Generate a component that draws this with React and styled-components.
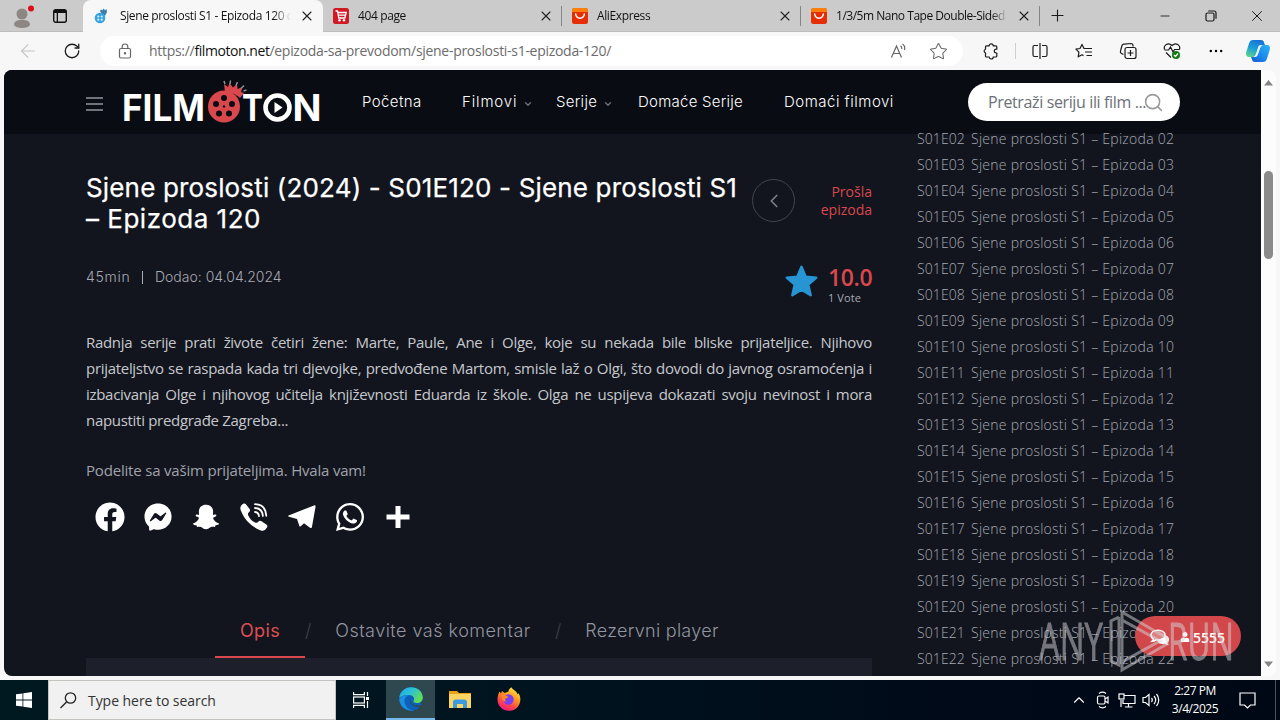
import styled, { createGlobalStyle } from "styled-components";
import {
  ArrowLeft,
  RotateCw,
  Star,
  X,
  Plus,
  Minus,
  Search,
  ChevronDown,
  ChevronLeft,
  ChevronUp,
} from "lucide-react";
import {
  FaFacebook,
  FaFacebookMessenger,
  FaSnapchatGhost,
  FaWhatsapp,
  FaUser,
} from "react-icons/fa";

const GlobalStyle = createGlobalStyle`
  * {
    box-sizing: border-box;
  }
  body {
    margin: 0;
    overflow: hidden;
    font-family: "Open Sans", "Noto Sans", sans-serif;
  }
  svg {
    display: block;
    flex: none;
    overflow: visible;
  }
`;

const Screen = styled.div`
  width: 1280px;
  height: 720px;
  display: flex;
  flex-direction: column;
  background: #f7f7f7;
`;

/* ---------- browser chrome ---------- */

const TabStrip = styled.div`
  height: 32px;
  display: flex;
  background: #cbcbcb;
  border-bottom: 1px solid #bdbdbd;
`;
const Slot = styled.div`
  width: ${({ $w }) => $w || 44}px;
  height: 100%;
  flex: none;
  display: flex;
  align-items: center;
  justify-content: center;
  color: ${({ $color }) => $color || "#1b1b1b"};
`;
const Tab = styled.div`
  width: ${({ $active }) => ($active ? 240 : 239)}px;
  height: 32px;
  display: flex;
  align-items: center;
  padding: 0 8px 0 ${({ $active }) => ($active ? 11 : 10)}px;
  gap: 8px;
  background: ${({ $active }) => ($active ? "#f7f7f7" : "transparent")};
  border-radius: 8px 8px 0 0;
`;
const TabTitle = styled.div`
  flex: 1;
  overflow: hidden;
  white-space: nowrap;
  color: #111;
  font-size: 12px;
  line-height: 18px;
  letter-spacing: ${({ $ls }) => $ls || -0.38}px;
  padding-left: ${({ $indent }) => $indent || 0}px;
  mask-image: linear-gradient(90deg, #000 90%, transparent);
`;
const TabDivider = styled.div`
  width: 1px;
  height: 20px;
  margin: 6px 0 0 -1px;
  background: #858585;
`;
const Spacer = styled.div`
  flex: 1;
`;

const Toolbar = styled.div`
  height: 38px;
  display: flex;
  align-items: center;
  padding-left: 6px;
  background: #f7f7f7;
`;
const AddressBar = styled.div`
  width: 863px;
  height: 30px;
  margin: 0 6px;
  display: flex;
  align-items: center;
  border-radius: 15px;
  background: #fff;
  color: #6b6b6b;
`;
const Url = styled.div`
  flex: 1;
  white-space: nowrap;
  font-size: 14px;
  line-height: 20px;
  letter-spacing: -0.29px;
`;
const Host = styled.span`
  color: #111;
  letter-spacing: -0.44px;
`;
const ToolDivider = styled.div`
  width: 1px;
  height: 16px;
  margin: 0 2px;
  background: #cfcfcf;
`;

const Viewport = styled.div`
  height: 606px;
  margin: 0 4px;
  display: flex;
  overflow: hidden;
  border-radius: 8px;
  position: relative;
`;
const ScrollTrack = styled.div`
  width: 15px;
  display: flex;
  flex-direction: column;
  align-items: center;
  padding: 10px 0 9px;
  background: #fcfcfc;
`;
const ScrollThumb = styled.div`
  width: 9px;
  height: 88px;
  margin-top: 85px;
  border-radius: 5px;
  background: #8b8b8b;
`;

/* ---------- site ---------- */

const Site = styled.div`
  width: 1257px;
  height: 606px;
  display: flex;
  flex-direction: column;
  overflow: hidden;
  background: #12151e;
`;
const SiteHeader = styled.header`
  height: 64px;
  flex: none;
  display: flex;
  align-items: center;
  padding: 0 81px 0 82px;
  background: #0a0c14;
`;
const Burger = styled.div`
  width: 17px;
  height: 14px;
  margin: 3px 21px 0 0;
  display: flex;
  flex-direction: column;
  justify-content: space-between;
`;
const BurgerLine = styled.div`
  height: 2px;
  background: #71737a;
`;
const Nav = styled.nav`
  flex: 1;
  height: 26px;
  display: flex;
  padding-left: 42px;
`;
const NavItem = styled.a`
  width: ${({ $w }) => $w}px;
  display: flex;
  align-items: center;
  gap: 6px;
  white-space: nowrap;
  color: #fff;
  font: 300 15px/24px Inter, sans-serif;
  letter-spacing: ${({ $ls }) => $ls}px;

  svg {
    color: #6f727a;
    margin-top: 4px;
  }
`;
const SearchBox = styled.div`
  width: 212px;
  height: 38px;
  display: flex;
  align-items: center;
  padding: 0 16px 0 20px;
  border-radius: 19px;
  background: #fff;
  color: #9b9b9b;
`;
const SearchText = styled.div`
  width: 155px;
  white-space: nowrap;
  color: #6c7077;
  font-size: 16px;
  line-height: 24px;
  letter-spacing: -0.37px;
`;

const Columns = styled.div`
  flex: 1;
  display: flex;
  gap: 45px;
  padding-left: 82px;
  min-height: 0;
`;
const Main = styled.main`
  width: 786px;
  display: flex;
  flex-direction: column;
`;
const TitleRow = styled.div`
  height: 130px;
  display: flex;
  padding-top: 38px;
`;
const Title = styled.h1`
  width: 666px;
  margin: 0;
  white-space: nowrap;
  color: #fff;
  font: 400 26px/31px Inter, sans-serif;
  letter-spacing: 0.16px;
  -webkit-text-stroke: 0.25px #fff;
`;
const TitleTail = styled.div`
  letter-spacing: 0.5px;
`;
const PrevButton = styled.div`
  width: 43px;
  height: 43px;
  margin-top: 7px;
  display: flex;
  align-items: center;
  justify-content: center;
  border: 1px solid #434650;
  border-radius: 50%;
  color: #7c7f88;
`;
const PrevLabel = styled.div`
  flex: 1;
  margin-top: 11px;
  text-align: right;
  color: #d9484c;
  font-size: 14px;
  line-height: 18px;
`;
const MetaRow = styled.div`
  height: 65px;
  display: flex;
  color: #a9abb3;
`;
const Meta = styled.div`
  flex: 1;
  display: flex;
  padding-top: 3px;
  font: 300 14px/20px Inter, sans-serif;
`;
const Duration = styled.span`
  width: 56px;
  letter-spacing: 0.7px;
`;
const Divider = styled.div`
  width: 1px;
  height: 13px;
  margin: 4px 12px 0 0;
  background: #a9abb3;
`;
const StarWrap = styled.div`
  padding-top: 1px;
`;
const Score = styled.div`
  width: 44px;
  margin-left: 10px;
`;
const ScoreValue = styled.div`
  color: #d9484c;
  font-size: 23px;
  font-weight: 600;
  line-height: 27px;
  letter-spacing: -0.4px;
`;
const Votes = styled.div`
  font-size: 11px;
  line-height: 14px;
  letter-spacing: 0.1px;
`;
const Summary = styled.div`
  height: 104px;
  color: #c6c8cd;
  font-size: 15px;
  line-height: 26px;
  letter-spacing: -0.3px;
`;
const SummaryLine = styled.div`
  white-space: nowrap;
  text-align: justify;
  text-align-last: ${({ $last }) => ($last ? "left" : "justify")};
`;
const ShareText = styled.div`
  margin-top: 24px;
  color: #a0a3ab;
  font-size: 15px;
  line-height: 26px;
  letter-spacing: -0.19px;
`;
const ShareRow = styled.div`
  display: flex;
  height: 48px;
  margin-top: 10px;
`;
const PageTabs = styled.div`
  height: 54px;
  margin-top: 63px;
  padding-left: 129px;
  display: flex;
  color: #9396a0;
  font: 300 18px/54px Inter, sans-serif;
`;
const PageTab = styled.div`
  width: ${({ $w }) => $w}px;
  flex: none;
  white-space: nowrap;
  text-align: center;
  letter-spacing: ${({ $ls }) => $ls}px;
  color: ${({ $active }) => ($active ? "#dd4f53" : "inherit")};
  font-weight: ${({ $active }) => ($active ? 400 : 300)};
  border-bottom: 2px solid ${({ $active }) => ($active ? "#d9484c" : "transparent")};
`;
const Slash = styled.div`
  width: 6px;
  text-align: center;
  color: #3d4049;
`;
const Panel = styled.div`
  height: 18px;
  background: #1d1f2b;
`;

const EpisodeList = styled.div`
  margin-top: -8px;
  color: #a6a9b1;
  font-size: 14px;
  font-weight: 300;
  line-height: 26px;
`;
const Episode = styled.div`
  height: 26px;
  display: flex;
  white-space: nowrap;
  letter-spacing: 0.26px;
`;
const Code = styled.span`
  width: 54px;
  letter-spacing: 0.1px;
`;

const ChatPill = styled.div`
  position: absolute;
  right: 35px;
  bottom: 20px;
  width: 106px;
  height: 40px;
  display: flex;
  align-items: center;
  gap: 3px;
  padding: 2px 0 0 15px;
  border-radius: 20px;
  background: #d1474a;
  color: #fff;
  font-size: 14px;
  font-weight: 600;

  svg + svg {
    margin-left: 7px;
  }
`;
const Watermark = styled.svg`
  position: absolute;
  left: 1034px;
  top: 538px;
  opacity: 0.5;
`;

/* ---------- taskbar ---------- */

const Taskbar = styled.div`
  height: 40px;
  margin-top: 4px;
  display: flex;
  background: linear-gradient(90deg, #001820 0%, #001420 40%, #000a18 75%, #000815 100%);
`;
const TaskSearch = styled.div`
  width: 288px;
  height: 40px;
  display: flex;
  align-items: center;
  gap: 11px;
  padding-left: 11px;
  border: 1px solid #c4c4c0;
  background: #f1f1f1;
  color: #333;
  font-size: 14px;
  letter-spacing: -0.05px;
`;
const TaskApp = styled.div`
  width: 49px;
  display: flex;
  align-items: center;
  justify-content: center;
  background: ${({ $active }) => ($active ? "#2f474f" : "transparent")};
  border-bottom: 2px solid ${({ $active }) => ($active ? "#76b9ed" : "transparent")};
`;
const Clock = styled.div`
  width: 64px;
  padding-top: 2px;
  text-align: center;
  color: #fff;
  font-size: 12px;
  line-height: 18px;
  letter-spacing: -0.45px;
`;
const ShowDesktop = styled.div`
  width: 5px;
  border-left: 1px solid #4a525c;
`;

/* ---------- drawings ---------- */

const Close = () => <X size={16} strokeWidth={1.6} color="#222" />;

const line = { fill: "none", stroke: "currentColor", strokeWidth: 1.2 };

const Avatar = () => (
  <svg width="24" height="26" viewBox="0 0 24 26">
    <circle cx="12" cy="11" r="5.5" fill="#8c8782" />
    <path d="M4 22c0-4 3-5 8-5s8 1 8 5c-1 2-4 3-8 3s-7-1-8-3z" fill="#8c8782" />
    <circle cx="21" cy="5.5" r="3" fill="#e00b1c" />
  </svg>
);
const Workspaces = () => (
  <svg width="16" height="16" viewBox="0 0 16 16">
    <rect x="1.7" y="1.7" width="12.6" height="12.6" rx="2" fill="none" stroke="#111" strokeWidth="1.4" />
    <path d="M2 2h12v3H6v9H4.700V5H2z" fill="#111" />
  </svg>
);
const FilmFavicon = () => (
  <svg width="14" height="16" viewBox="0 0 14 16">
    <path d="M6 3l1-1.500 1.500.7 1-1.700 1.500 1.700L12.500 1l.5 3-2 4-4-3z" fill="#3d7fa8" />
    <circle cx="6" cy="10" r="5.3" fill="#36a3e0" />
    <circle cx="4.3" cy="8.5" r="1.1" fill="#d8effa" />
    <circle cx="7.7" cy="8.5" r="1.1" fill="#d8effa" />
    <circle cx="4.3" cy="11.7" r="1.1" fill="#d8effa" />
    <circle cx="7.7" cy="11.7" r="1.1" fill="#d8effa" />
  </svg>
);
const CartFavicon = () => (
  <svg width="16" height="16" viewBox="0 0 16 16">
    <rect width="16" height="16" rx="2.5" fill="#cf1a26" />
    <path d="M2.500 3h2l1.300 7h6l1.400-5.500H5M5.500 7.200h7" fill="none" stroke="#fff" strokeWidth="1.3" />
    <circle cx="6.5" cy="12.3" r="1.2" fill="#fff" />
    <circle cx="11" cy="12.3" r="1.2" fill="#fff" />
  </svg>
);
const AliFavicon = () => (
  <svg width="16" height="16" viewBox="0 0 16 16">
    <rect width="16" height="16" rx="2.5" fill="#e62e04" />
    <path d="M2.500 0h11A2.500 2.500 0 0 1 16 2.500V4H0V2.500A2.500 2.500 0 0 1 2.500 0z" fill="#ff7f0e" />
    <path d="M3.700 6c.5 5.500 8.100 5.500 8.600 0" fill="none" stroke="#fff" strokeWidth="1.5" strokeLinecap="round" />
  </svg>
);
const Restore = () => (
  <svg width="12" height="12" viewBox="0 0 12 12" {...line}>
    <rect x="1" y="3" width="8" height="8" rx="1.5" />
    <path d="M3.200 1H9a2 2 0 0 1 2 2v5.800" />
  </svg>
);
const Lock = () => (
  <svg width="14" height="16" viewBox="0 0 14 16" {...line}>
    <rect x="1.5" y="5.5" width="11" height="9.5" rx="1.5" />
    <path d="M4.200 5.500V3.800a2.800 2.800 0 0 1 5.600 0v1.700" />
    <circle cx="7" cy="10.3" r=".6" fill="currentColor" />
  </svg>
);
const ReadAloud = () => (
  <svg width="17" height="16" viewBox="0 0 17 16" {...line}>
    <path d="M1.500 14.500L6.500 3l5 11.500M3.200 10.500h6.600M10.500 2.800c1.200.8 1.500 2 1.200 3.400M12.500 1c2.200 1.600 2.700 3.800 1.900 6" />
  </svg>
);
const Split = () => (
  <svg width="16" height="16" viewBox="0 0 16 16" {...line}>
    <path d="M6 2.500H2.500a1.500 1.500 0 0 0-1.500 1.500v8a1.500 1.500 0 0 0 1.500 1.500H6M10 2.500h3.500A1.500 1.500 0 0 1 15 4v8a1.500 1.500 0 0 1-1.500 1.500H10M8 0v16" />
  </svg>
);
const PuzzlePiece = () => (
  <svg width="16" height="16" viewBox="0 0 16 16" {...line} strokeLinejoin="round">
    <path d="M3.500 2.800h2.700a2 2 0 0 1 4 0h2.600a1 1 0 0 1 1 1v2.400h-.6a1.900 1.900 0 0 0 0 3.800h.6v3a1 1 0 0 1-1 1h-2.600a2 2 0 0 1-4 0H3.500a1 1 0 0 1-1-1v-3a2 2 0 0 1 0-3.800V3.800a1 1 0 0 1 1-1z" />
  </svg>
);
const Favorites = () => (
  <svg width="18" height="16" viewBox="0 0 18 16" {...line}>
    <path d="M11.500 5.500H9L7 1.500 5 5.500.9 6.200l3 3L3.200 13.800 7 11.800l1.500.8M11 5.500h6M10 9h7M11.500 12.500H17" strokeLinejoin="round" />
  </svg>
);
const Collections = () => (
  <svg width="18" height="18" viewBox="0 0 18 18" {...line}>
    <path d="M4.500 12.500l-2-1a2 2 0 0 1-1-2.500L3 3.500a2 2 0 0 1 2.500-1.300L12 1.500a2 2 0 0 1 2 2v1" />
    <rect x="6" y="5.5" width="11" height="11" rx="2" />
    <path d="M11.500 8v6M8.500 11h6" />
  </svg>
);
const Health = () => (
  <svg width="18" height="18" viewBox="0 0 18 18" {...line}>
    <path d="M1.500 7.500C.3 3.500 5-.5 9 3.500c4-4 8.700 0 7.500 4M1.500 8h4l2-3 2.500 5 1.500-2.500h5M3 10.500l5 5" />
    <circle cx="13" cy="13" r="4" fill="#107c10" stroke="none" />
    <path d="M11 13l1.500 1.500 2.500-3" stroke="#fff" />
  </svg>
);
const More = () => (
  <svg width="14" height="4" viewBox="0 0 14 4">
    <circle cx="1.8" cy="2" r="1.2" />
    <circle cx="7" cy="2" r="1.2" />
    <circle cx="12.2" cy="2" r="1.2" />
  </svg>
);
const Copilot = () => (
  <svg width="24" height="22" viewBox="0 0 24 22">
    <defs>
      <linearGradient id="cpA" x1=".6" y1="0" x2=".2" y2="1">
        <stop offset="0" stopColor="#1673d6" />
        <stop offset=".5" stopColor="#1c9fd8" />
        <stop offset="1" stopColor="#5bd58a" />
      </linearGradient>
      <linearGradient id="cpB" x1="1" y1="0" x2="0" y2="1">
        <stop offset="0" stopColor="#2cb4f2" />
        <stop offset=".5" stopColor="#1c8df0" />
        <stop offset="1" stopColor="#1458d0" />
      </linearGradient>
    </defs>
    <path d="M7 0h8c2 0 2.700 1 3 2.500L19 5h-3c-2.500 0-3.300 1-4 3l-2 6c-.6 2-1.500 3-3.500 3H3.500C.5 17-.5 15 .3 12L3 3.500C3.700 1 5 0 7 0z" fill="url(#cpA)" />
    <path d="M17 22H9c-2 0-2.700-1-3-2.500L5 17h3c2.500 0 3.300-1 4-3l2-6c.6-2 1.500-3 3.500-3h3c3 0 4 2 3.200 5L21 18.500c-.7 2.500-2 3.500-4 3.500z" fill="url(#cpB)" />
    <path d="M13 5.500h3.500c-1.500.5-2 1.300-2.500 2.500l-2 6c-.5 1.500-1.200 2.500-2.500 2.700H8c1.200-.7 1.700-1.500 2.200-3l2-6c.2-.8.400-1.500.8-2.200z" fill="#eaf6fd" />
  </svg>
);

const Logo = () => (
  <svg width="196" height="46" viewBox="0 0 196 46" fill="#fff" fontFamily="Inter, sans-serif" fontWeight="700" fontSize="37">
    <text x="-2" y="41.500" textLength="83" lengthAdjust="spacingAndGlyphs">FILM</text>
    <path d="M101 13l-1-8 4 3 1.500-4 3.500 4.500 4-3.500.5 5 5-2-1.500 5 3 1-4 5c-4-4-10-6-15-6z" fill="#d9484c" />
    <path d="M101 5l-1-3M106 5l.5-3.500M112 6.500l1.500-3.500M117 9.500l3-3M119.500 12l3-1" stroke="#8d8f96" strokeWidth="1.5" />
    <circle cx="100" cy="27.500" r="16" fill="#d9484c" />
    <g fill="#0a0c14">
      <circle cx="100" cy="19" r="3" />
      <circle cx="108" cy="25" r="3" />
      <circle cx="105" cy="34.500" r="3" />
      <circle cx="95" cy="34.500" r="3" />
      <circle cx="92" cy="25" r="3" />
      <circle cx="100" cy="27.500" r="1.2" />
    </g>
    <text x="118" y="41.500" textLength="21" lengthAdjust="spacingAndGlyphs">T</text>
    <circle cx="153.500" cy="28.500" r="12" fill="none" stroke="#fff" strokeWidth="4.6" />
    <path d="M150.500 23v11l8-5.500z" />
    <text x="168.500" y="41.500" textLength="29" lengthAdjust="spacingAndGlyphs">N</text>
  </svg>
);

const RatingStar = () => (
  <svg width="33" height="33" viewBox="0 0 33 33">
    <path
      d="M16.500 1.800l4.200 9.800 10.600 1-8 7 2.400 10.600-9.200-5.600-9.200 5.600 2.400-10.600-8-7 10.600-1z"
      fill="#2795d3"
      stroke="#2795d3"
      strokeWidth="2.4"
      strokeLinejoin="round"
    />
  </svg>
);
const Phone = () => (
  <svg width="28" height="28" viewBox="0 0 28 28">
    <path
      d="M3.200.8c1-.7 2-.4 2.700.4L9.600 6c.8 1.200.6 2-.3 2.900-1.600 1.300-1.600 2-.9 3.800 1.300 3 3.500 5.200 6.600 6.700 1.600.7 2.200.6 3.300-.7 1-1.200 1.900-1.400 3.200-.5l4.800 3.400c1.200.9 1.400 1.800.6 3-1.700 2.700-3.700 3.800-6 2.900C11.200 23.500 4.600 17 .8 7.500-.2 4.800.4 2.500 3.200.8z"
      fill="#fff"
    />
    <path
      d="M15 9c2.400.2 3.800 1.700 4 4.200M15 5c4.800.2 7.600 3.200 7.900 8M15 1.200c7 .3 11 4.600 11.300 11.600"
      fill="none"
      stroke="#fff"
      strokeWidth="1.8"
      strokeLinecap="round"
    />
  </svg>
);
const PaperPlane = () => (
  <svg width="28" height="24" viewBox="0 0 28 24">
    <path
      d="M.5 10.500L26 .4c1-.4 1.800.2 1.500 1.500L24 21.800c-.2 1.300-1 1.600-2 1l-6-4.600-3.200 3c-.7.600-1.300.4-1.500-.5L9 14 1 11.700c-.8-.3-1-.9-.5-1.200z"
      fill="#fff"
    />
  </svg>
);
const ThickPlus = () => (
  <svg width="24" height="24" viewBox="0 0 24 24">
    <path d="M12 1v22M.5 12h23" stroke="#fff" strokeWidth="5" />
  </svg>
);
const Bubbles = () => (
  <svg width="20" height="17" viewBox="0 0 20 17">
    <path d="M12 5.500c4 .2 7 2.300 7 5 0 1.500-.8 2.600-1.700 3.400.2 1 .9 1.700 1.600 2.300-1.700 0-3-.6-4-1.400-3.200.6-6-.2-7.400-1.800z" fill="#fff" />
    <path d="M8 1.200c4 0 7 2 7 4.900S12 11 8 11c-.8 0-1.500 0-2.200-.2-1 .9-2.300 1.400-3.800 1.500.7-.7 1.200-1.500 1.300-2.300C1.900 9.100 1 7.700 1 6.100c0-2.900 3-4.900 7-4.900z" fill="#de7f82" stroke="#fff" strokeWidth="1.6" />
  </svg>
);
const Arrow = ({ up }) => (
  <svg width="9" height="6" viewBox="0 0 9 6">
    <path d={up ? "M0 5.500L4.500 0 9 5.500z" : "M0 .5L4.500 6 9 .5z"} fill="#858585" />
  </svg>
);

const Windows = () => (
  <svg width="16" height="16" viewBox="0 0 16 16" fill="#fff">
    <path d="M0 2.300l6.500-.9v6.200H0zM7.300 1.300L16 0v7.600H7.300zM0 8.400h6.500v6.200L0 13.700zM7.300 8.400H16V16l-8.700-1.300z" />
  </svg>
);
const TaskSearchIcon = () => (
  <svg width="17" height="17" viewBox="0 0 17 17" fill="none" stroke="#222" strokeWidth="1.3">
    <circle cx="10.5" cy="6" r="5.2" />
    <path d="M6.800 9.700L.5 16" />
  </svg>
);
const TaskView = () => (
  <svg width="17" height="16" viewBox="0 0 17 16" fill="none" stroke="#fff" strokeWidth="1.2">
    <path d="M.6 0v2.600h10.800V0M.6 16v-2.600h10.800V16M14.500 0v4M14.500 9v7" />
    <rect x=".6" y="5" width="10.8" height="6" />
    <path d="M13 5h3v3h-3z" fill="#fff" stroke="none" />
  </svg>
);
const Edge = () => (
  <svg width="24" height="24" viewBox="0 0 24 24">
    <defs>
      <linearGradient id="edA" x1="0" y1="0" x2="1" y2=".6">
        <stop offset="0" stopColor="#1fa4e4" />
        <stop offset=".5" stopColor="#2cc3d5" />
        <stop offset="1" stopColor="#66dc53" />
      </linearGradient>
    </defs>
    <circle cx="12" cy="12" r="11.8" fill="#0c62b8" />
    <path d="M.2 11C1 4.500 6 .2 12 .2c7 0 11.800 4.800 11.800 10.300 0 3.500-2.600 5.500-5.800 5.500-2.500 0-4-1-3.500-2 1.800-3-.5-6-4.500-6C5 8 1 9.500.2 11z" fill="url(#edA)" />
    <path d="M10.500 8.500C6 9 4.500 13 6 17c1.500 4 5 6.500 9 6.200C10 24.500 1 22 .2 12 2 8.500 7 7.500 10.500 8.500z" fill="#1b8fe0" />
    <path d="M11.500 10.500c-1.500 3 .5 8 7 8 2 0 3.500-.3 5-1l-1 1.500-2 .8c-7 1-12-4.500-9-9.300zM24 13v5l-3-2c1.500-.7 2.500-1.700 3-3z" fill="#2f474f" />
  </svg>
);
const Explorer = () => (
  <svg width="22" height="19" viewBox="0 0 22 19">
    <path d="M0 1h8l2 2h12v5H0z" fill="#e8a317" />
    <path d="M0 4h22v14H0z" fill="#fcd462" />
    <path d="M4 18v-7l2-1.500h10l2 1.500v7h-4v-4H8v4z" fill="#3b9be0" />
  </svg>
);
const Firefox = () => (
  <svg width="24" height="24" viewBox="0 0 24 24">
    <defs>
      <linearGradient id="ffA" x1=".8" y1="0" x2=".3" y2="1">
        <stop offset="0" stopColor="#fff04a" />
        <stop offset=".4" stopColor="#ff9a1f" />
        <stop offset=".75" stopColor="#ff3f4e" />
        <stop offset="1" stopColor="#e8177f" />
      </linearGradient>
    </defs>
    <path d="M2.500 4.500L4 6.500l1-2.500 2.500 2 4-1.500C11.500 2.500 13 1 14.500.2c.5 2.500 5 3 6 7l1-1c2 3 2.200 6 1.500 9-1.200 5-5.500 8.600-11 8.600C5.500 23.800.5 19 .5 12.500c0-3 .8-6 2-8z" fill="url(#ffA)" />
    <circle cx="11.5" cy="12.5" r="5.2" fill="#7a3ff0" />
    <path d="M5 9c2-1.500 5-.5 6.500 1.200-1.500.8-3.500.8-3.500 2.300 0 1 1 1.500 2 1.500-2.500 1.500-5.500-1-5-5z" fill="#ff8a1f" />
  </svg>
);
const MeetNow = () => (
  <svg width="14" height="18" viewBox="0 0 14 18" fill="none" stroke="#fff" strokeWidth="1.2">
    <rect x="1.5" y="5" width="7.5" height="8" rx="1.5" />
    <path d="M9 8l3-2v6l-3-2M3 2.500c2-1.500 5-1.500 7 0M3 15.500c2 1.500 5 1.500 7 0" />
  </svg>
);
const Network = () => (
  <svg width="18" height="15" viewBox="0 0 18 15" fill="none" stroke="#fff" strokeWidth="1.2">
    <path d="M6 2.500h11v8H5V7M10.500 10.500v3.500M7 14h7.500M3 7v7" />
    <rect x="1" y="1" width="5" height="5" />
  </svg>
);
const Volume = () => (
  <svg width="18" height="14" viewBox="0 0 18 14" fill="none" stroke="#fff" strokeWidth="1.2">
    <path d="M1 4.500h2.500L7 1.500v11L3.500 9.500H1zM9.500 5c1 1.200 1 2.800 0 4M12 3c2 2.400 2 5.600 0 8M14.500 1c3 3.500 3 8.500 0 12" />
  </svg>
);
const Notifications = () => (
  <svg width="17" height="17" viewBox="0 0 17 17" fill="none" stroke="#fff" strokeWidth="1.2">
    <path d="M1 1h15v12h-4.500L8.500 16l-3-3H1z" />
  </svg>
);

const episodes = Array.from({ length: 21 }, (_, i) => String(i + 2).padStart(2, "0"));

const App = () => {
  return (
    <Screen>
      <GlobalStyle />
      <TabStrip>
        <Slot><Avatar /></Slot>
        <Slot $w={32}><Workspaces /></Slot>
        <Slot $w={7} />
        <Tab $active>
          <FilmFavicon />
          <TabTitle $indent={4}>Sjene proslosti S1 - Epizoda 120 o</TabTitle>
          <Close />
        </Tab>
        <Tab>
          <CartFavicon />
          <TabTitle $indent={1}>404 page</TabTitle>
          <Close />
        </Tab>
        <TabDivider />
        <Tab>
          <AliFavicon />
          <TabTitle $indent={1}>AliExpress</TabTitle>
          <Close />
        </Tab>
        <TabDivider />
        <Tab>
          <AliFavicon />
          <TabTitle $indent={1} $ls={-0.48}>1/3/5m Nano Tape Double-Sided</TabTitle>
          <Close />
        </Tab>
        <TabDivider />
        <Slot $w={35}><Plus size={19} strokeWidth={1.4} /></Slot>
        <Spacer />
        <Slot $w={46}><Minus size={14} strokeWidth={1.5} /></Slot>
        <Slot $w={46}><Restore /></Slot>
        <Slot $w={46}><X size={18} strokeWidth={1.3} /></Slot>
      </TabStrip>

      <Toolbar>
        <Slot $color="#c4c4c4"><ArrowLeft size={22} strokeWidth={1.2} /></Slot>
        <Slot><RotateCw size={18} strokeWidth={1.7} /></Slot>
        <AddressBar>
          <Slot $w={49} $color="#666"><Lock /></Slot>
          <Url>
            https://<Host>filmoton.net</Host>/epizoda-sa-prevodom/sjene-proslosti-s1-epizoda-120/
          </Url>
          <Slot $w={40} $color="#666"><ReadAloud /></Slot>
          <Slot $w={40} $color="#666"><Star size={19} strokeWidth={1.3} /></Slot>
          <Slot $w={5} />
        </AddressBar>
        <Slot><PuzzlePiece /></Slot>
        <ToolDivider />
        <Slot><Split /></Slot>
        <Slot><Favorites /></Slot>
        <Slot><Collections /></Slot>
        <Slot><Health /></Slot>
        <Slot><More /></Slot>
        <Slot $w={40}><Copilot /></Slot>
      </Toolbar>

      <Viewport>
        <Site>
          <SiteHeader>
            <Burger>
              <BurgerLine />
              <BurgerLine />
              <BurgerLine />
            </Burger>
            <Logo />
            <Nav>
              <NavItem $w={100} $ls={0.4}>Početna</NavItem>
              <NavItem $w={94} $ls={0.85}>
                Filmovi <ChevronDown size={10} strokeWidth={3} />
              </NavItem>
              <NavItem $w={82} $ls={0.3}>
                Serije <ChevronDown size={10} strokeWidth={3} />
              </NavItem>
              <NavItem $w={146} $ls={0.25}>Domaće Serije</NavItem>
              <NavItem $w={111} $ls={0.5}>Domaći filmovi</NavItem>
            </Nav>
            <SearchBox>
              <SearchText>Pretraži seriju ili film ...</SearchText>
              <Search size={21} strokeWidth={1.8} />
            </SearchBox>
          </SiteHeader>

          <Columns>
            <Main>
              <TitleRow>
                <Title>
                  Sjene proslosti (2024) - S01E120 - Sjene proslosti S1
                  <TitleTail>– Epizoda 120</TitleTail>
                </Title>
                <PrevButton><ChevronLeft size={22} strokeWidth={1.8} /></PrevButton>
                <PrevLabel>
                  Prošla
                  <br />
                  epizoda
                </PrevLabel>
              </TitleRow>
              <MetaRow>
                <Meta>
                  <Duration>45min</Duration>
                  <Divider />
                  <span>Dodao: 04.04.2024</span>
                </Meta>
                <StarWrap><RatingStar /></StarWrap>
                <Score>
                  <ScoreValue>10.0</ScoreValue>
                  <Votes>1 Vote</Votes>
                </Score>
              </MetaRow>
              <Summary>
                <SummaryLine>
                  Radnja serije prati živote četiri žene: Marte, Paule, Ane i Olge, koje su nekada bile bliske prijateljice. Njihovo
                </SummaryLine>
                <SummaryLine>
                  prijateljstvo se raspada kada tri djevojke, predvođene Martom, smisle laž o Olgi, što dovodi do javnog osramoćenja i
                </SummaryLine>
                <SummaryLine>
                  izbacivanja Olge i njihovog učitelja književnosti Eduarda iz škole. Olga ne uspijeva dokazati svoju nevinost i mora
                </SummaryLine>
                <SummaryLine $last>napustiti predgrađe Zagreba...</SummaryLine>
              </Summary>
              <ShareText>Podelite sa vašim prijateljima. Hvala vam!</ShareText>
              <ShareRow>
                <Slot $w={48} $color="#fff"><FaFacebook size={30} /></Slot>
                <Slot $w={48} $color="#fff"><FaFacebookMessenger size={28} /></Slot>
                <Slot $w={48} $color="#fff"><FaSnapchatGhost size={26} /></Slot>
                <Slot $w={48}><Phone /></Slot>
                <Slot $w={48}><PaperPlane /></Slot>
                <Slot $w={48} $color="#fff"><FaWhatsapp size={32} /></Slot>
                <Slot $w={48}><ThickPlus /></Slot>
              </ShareRow>
              <PageTabs>
                <PageTab $w={90} $ls={0.4} $active>Opis</PageTab>
                <Slash>/</Slash>
                <PageTab $w={244} $ls={0.48}>Ostavite vaš komentar</PageTab>
                <Slash>/</Slash>
                <PageTab $w={182} $ls={0.28}>Rezervni player</PageTab>
              </PageTabs>
              <Panel />
            </Main>
            <EpisodeList>
              {episodes.map((n) => (
                <Episode key={n}>
                  <Code>S01E{n}</Code>
                  Sjene proslosti S1 – Epizoda {n}
                </Episode>
              ))}
            </EpisodeList>
          </Columns>
        </Site>
        <ScrollTrack>
          <Arrow up />
          <ScrollThumb />
          <Spacer />
          <Arrow />
        </ScrollTrack>
        <ChatPill>
          <Bubbles />
          <FaUser size={10} />
          5555
        </ChatPill>
        <Watermark width="196" height="66" viewBox="0 0 196 66" fill="#d8d8dc" fontFamily="Open Sans, sans-serif" fontWeight="400" fontSize="52">
          <text x="1" y="52" textLength="64" lengthAdjust="spacingAndGlyphs" stroke="#d8d8dc" strokeWidth=".8">ANY</text>
          <g fill="none" stroke="#d8d8dc" strokeWidth="3">
            <path d="M81 9l-8 4v40l8 4V9" />
            <path d="M84 12V4l45 26v6L84 62v-8l38-21zM84 12v42" />
          </g>
          <text x="130" y="52" textLength="66" lengthAdjust="spacingAndGlyphs" stroke="#d8d8dc" strokeWidth=".8">RUN</text>
        </Watermark>
      </Viewport>

      <Taskbar>
        <Slot $w={48}><Windows /></Slot>
        <TaskSearch>
          <TaskSearchIcon />
          Type here to search
        </TaskSearch>
        <Slot $w={50}><TaskView /></Slot>
        <TaskApp $active><Edge /></TaskApp>
        <TaskApp><Explorer /></TaskApp>
        <TaskApp><Firefox /></TaskApp>
        <Spacer />
        <Slot $w={24} $color="#fff"><ChevronUp size={18} strokeWidth={1.5} /></Slot>
        <Slot $w={24}><MeetNow /></Slot>
        <Slot $w={24}><Network /></Slot>
        <Slot $w={24}><Volume /></Slot>
        <Clock>
          2:27 PM
          <br />
          3/4/2025
        </Clock>
        <Slot $w={40}><Notifications /></Slot>
        <Slot $w={8} />
        <ShowDesktop />
      </Taskbar>
    </Screen>
  );
};

export default App;
